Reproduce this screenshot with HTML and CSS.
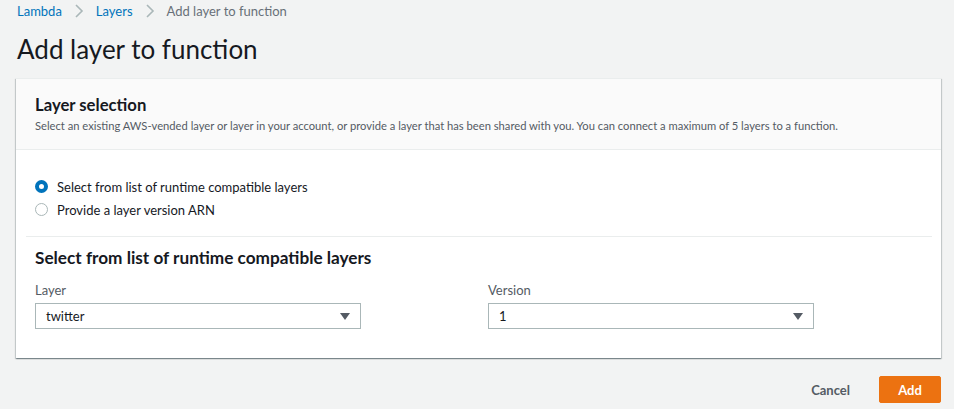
FILE: index.html
```html
<!DOCTYPE html>
<html lang="en">
<head>
    <meta charset="UTF-8">
    <title>Add layer to function</title>
    <link rel="stylesheet" href="styles.css">
</head>
<body>
    <div class="page">
        <nav class="crumbs">
            <a href="#">Lambda</a>
            <span class="sep">
                <svg width="10" height="14" viewBox="0 0 10 14"><path d="M2 1l6 6-6 6" fill="none" stroke="#aab7b8" stroke-width="1.6"/></svg>
            </span>
            <a href="#">Layers</a>
            <span class="sep">
                <svg width="10" height="14" viewBox="0 0 10 14"><path d="M2 1l6 6-6 6" fill="none" stroke="#aab7b8" stroke-width="1.6"/></svg>
            </span>
            <span class="current">Add layer to function</span>
        </nav>

        <h1 class="title">Add layer to function</h1>

        <div class="card">
            <div class="card-header">
                <h2>Layer selection</h2>
                <p>Select an existing AWS-vended layer or layer in your account, or provide a layer that has been shared with you. You can connect a maximum of 5 layers to a function.</p>
            </div>
            <div class="card-body">
                <div class="radios">
                    <label class="radio checked"><span class="dot"></span>Select from list of runtime compatible layers</label>
                    <label class="radio"><span class="dot"></span>Provide a layer version ARN</label>
                </div>
                <div class="divider"></div>
                <div class="section">
                    <h3>Select from list of runtime compatible layers</h3>
                    <div class="fields">
                        <div class="field">
                            <div class="label">Layer</div>
                            <div class="select">
                                <span>twitter</span>
                                <svg width="10" height="7" viewBox="0 0 10 7"><path d="M0 0h10L5 7z" fill="#545b64"/></svg>
                            </div>
                        </div>
                        <div class="field">
                            <div class="label">Version</div>
                            <div class="select">
                                <span>1</span>
                                <svg width="10" height="7" viewBox="0 0 10 7"><path d="M0 0h10L5 7z" fill="#545b64"/></svg>
                            </div>
                        </div>
                    </div>
                </div>
            </div>
        </div>

        <div class="actions">
            <button class="cancel">Cancel</button>
            <button class="add">Add</button>
        </div>
    </div>
</body>
</html>
```

FILE: styles.css
```css
body {
    margin: 0;
    background: #f2f3f3;
    font-family: 'Lato', sans-serif;
    color: #16191f;
}
.page {
    padding: 1px 13px 0 16px;
}
.crumbs {
    display: flex;
    align-items: center;
    height: 20px;
    font-size: 13px;
    padding-left: 1px;
}
.crumbs a {
    color: #0073bb;
    text-decoration: none;
}
.crumbs .sep {
    display: flex;
    margin: 0 12px 0 12px;
}
.crumbs .current {
    color: #687078;
}
.title {
    font-size: 26px;
    font-weight: 400;
    margin: 12px 0 0 1px;
    line-height: 32px;
}
.card {
    margin-top: 13px;
    background: #fff;
    box-shadow: 0 1px 1px 0 rgba(0,28,36,0.3), 1px 1px 1px 0 rgba(0,28,36,0.15), -1px 1px 1px 0 rgba(0,28,36,0.15);
    border-top: 1px solid #eaeded;
}
.card-header {
    background: #fafafa;
    border-bottom: 1px solid #eaeded;
    padding: 15px 19px 15px;
}
.card-header h2 {
    margin: 0;
    font-size: 16.7px;
    font-weight: 700;
    line-height: 22px;
}
.card-header p {
    margin: 2px 0 0;
    font-size: 11.2px;
    color: #545b64;
    line-height: 16px;
}
.card-body {
    padding: 0 9px 29px 10px;
}
.radios {
    padding: 25px 0 15px 9px;
}
.radio {
    display: flex;
    align-items: center;
    font-size: 13px;
    height: 23px;
}
.radio .dot {
    width: 11px;
    height: 11px;
    border: 1px solid #aab7b8;
    border-radius: 50%;
    margin: 0 9px 0 0;
    background: #fff;
    box-sizing: content-box;
}
.radio.checked .dot {
    border: 4px solid #0073bb;
    width: 5px;
    height: 5px;
}
.divider {
    border-top: 1px solid #eaeded;
}
.section {
    padding: 10px 0 0 9px;
}
.section h3 {
    margin: 0;
    font-size: 17.2px;
    font-weight: 700;
    line-height: 22px;
}
.fields {
    display: flex;
    gap: 127px;
    margin-top: 13px;
}
.field {
    width: 326px;
}
.label {
    font-size: 13px;
    color: #545b64;
    line-height: 16px;
    margin-bottom: 5px;
}
.select {
    display: flex;
    justify-content: space-between;
    align-items: center;
    height: 24px;
    border: 1px solid #aab7b8;
    padding: 0 10px 0 10px;
    font-size: 13px;
}
.actions {
    display: flex;
    justify-content: flex-end;
    align-items: center;
    gap: 9px;
    margin-top: 18px;
}
.actions button {
    font-family: inherit;
    font-size: 13px;
    font-weight: 700;
    border-radius: 2px;
    height: 27px;
    cursor: pointer;
}
.cancel {
    background: none;
    border: none;
    color: #545b64;
    padding: 0 20px;
}
.add {
    background: #ec7211;
    border: 1px solid #ec7211;
    color: #fff;
    width: 62px;
}
```
